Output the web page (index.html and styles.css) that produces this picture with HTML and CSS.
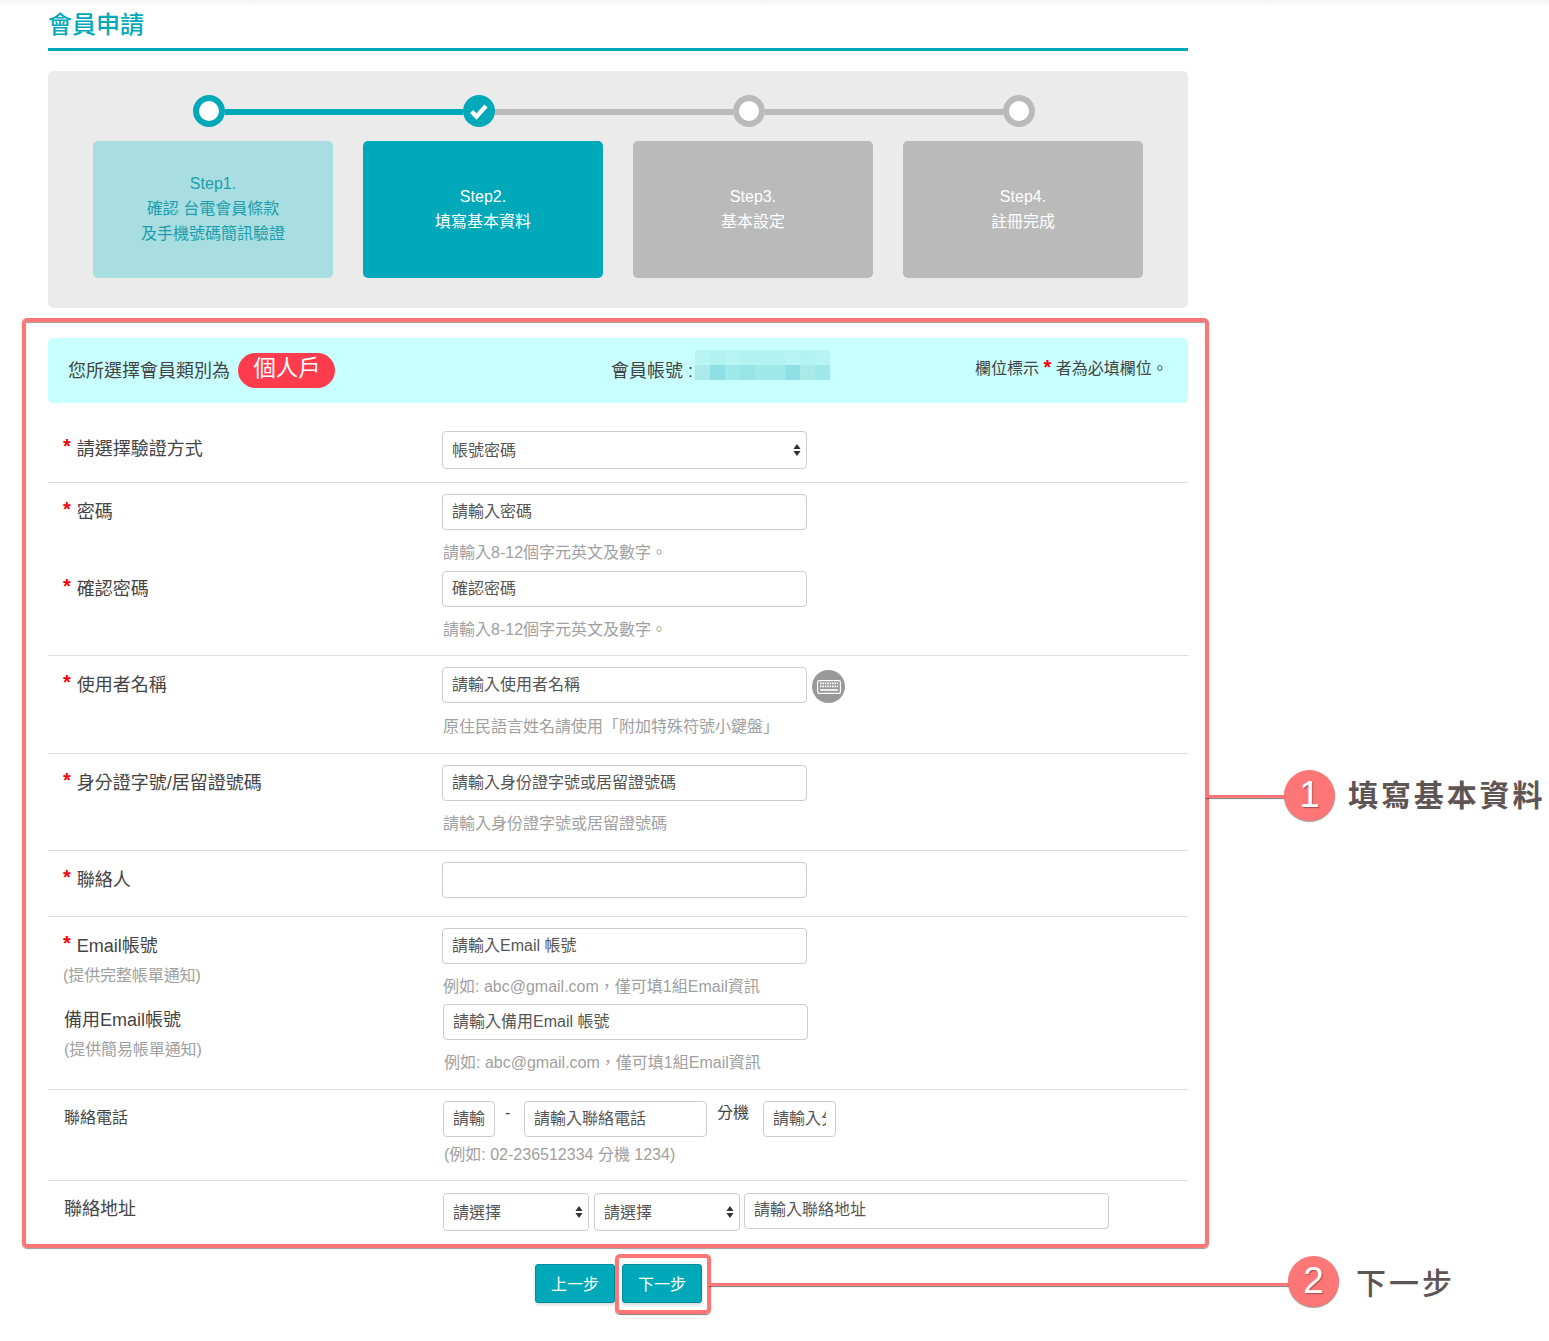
FILE: index.html
```html
<!DOCTYPE html>
<html lang="zh-Hant">
<head>
<meta charset="utf-8">
<title>會員申請</title>
<link rel="stylesheet" href="styles.css">
</head>
<body>
<main class="page">
  <h1 class="title">會員申請</h1>

  <section class="steps">
    <div class="track">
      <span class="dot dot-on"></span>
      <span class="seg seg-on"></span>
      <span class="dot dot-done">
        <svg viewBox="0 0 32 32" width="32" height="32"><path d="M8.5 16.5l5 5 9.5-10.5" fill="none" stroke="#fff" stroke-width="4.4"/></svg>
      </span>
      <span class="seg"></span>
      <span class="dot"></span>
      <span class="seg"></span>
      <span class="dot"></span>
    </div>
    <div class="cards">
      <div class="card card-past">Step1.<br>確認 台電會員條款<br>及手機號碼簡訊驗證</div>
      <div class="card card-now">Step2.<br>填寫基本資料</div>
      <div class="card">Step3.<br>基本設定</div>
      <div class="card">Step4.<br>註冊完成</div>
    </div>
  </section>

  <section class="banner">
    <div class="type">您所選擇會員類別為<span class="badge">個人戶</span></div>
    <div class="account">會員帳號 :
      <span class="mosaic">
        <i class="m1"></i><i class="m2"></i><i class="m1"></i><i class="m2"></i><i class="m2"></i><i class="m2"></i><i class="m1"></i><i class="m2"></i><i class="m1"></i>
        <i class="m3"></i><i class="m5"></i><i class="m4"></i><i class="m5b"></i><i class="m4"></i><i class="m4"></i><i class="m5"></i><i class="m3"></i><i class="m4"></i>
      </span>
    </div>
    <div class="note">欄位標示 <b class="star star-note">*</b> 者為必填欄位。</div>
  </section>

  <form class="form">
    <div class="row row-first">
      <label class="label"><b class="star">*</b> 請選擇驗證方式</label>
      <div class="sel sel-wide">
        <select><option>帳號密碼</option></select>
        <svg class="arrows" viewBox="0 0 8 12" width="8" height="12"><path d="M4 0l3.6 5H.4zM4 12L.4 7h7.2z" fill="#333"/></svg>
      </div>
    </div>

    <div class="row row-b7">
      <label class="label"><b class="star">*</b> 密碼</label>
      <div>
        <input class="in" type="text" placeholder="請輸入密碼">
        <p class="help">請輸入8-12個字元英文及數字。</p>
      </div>
      <label class="label"><b class="star">*</b> 確認密碼</label>
      <div>
        <input class="in" type="text" placeholder="確認密碼">
        <p class="help">請輸入8-12個字元英文及數字。</p>
      </div>
    </div>

    <div class="row row-b9">
      <label class="label"><b class="star">*</b> 使用者名稱</label>
      <div>
        <div class="with-key">
          <input class="in" type="text" placeholder="請輸入使用者名稱">
          <span class="key">
            <svg viewBox="0 0 24 14" width="24" height="14"><rect x=".6" y=".6" width="22.8" height="12.8" rx="1.6" fill="none" stroke="#fff" stroke-width="1.2"/><path d="M3 3.4h18M3 6.4h18" stroke="#fff" stroke-width="1.6" stroke-dasharray="1.6 .8"/><path d="M3 10h18" stroke="#fff" stroke-width="1.6"/></svg>
          </span>
        </div>
        <p class="help help-low">原住民語言姓名請使用「附加特殊符號小鍵盤」</p>
      </div>
    </div>

    <div class="row row-b8">
      <label class="label"><b class="star">*</b> 身分證字號/居留證號碼</label>
      <div>
        <input class="in" type="text" placeholder="請輸入身份證字號或居留證號碼">
        <p class="help">請輸入身份證字號或居留證號碼</p>
      </div>
    </div>

    <div class="row row-b18">
      <label class="label"><b class="star">*</b> 聯絡人</label>
      <div><input class="in" type="text"></div>
    </div>

    <div class="row row-b8">
      <div>
        <label class="label"><b class="star">*</b> Email帳號</label>
        <p class="sub">(提供完整帳單通知)</p>
      </div>
      <div>
        <input class="in" type="text" placeholder="請輸入Email 帳號">
        <p class="help help-short">例如: abc@gmail.com，僅可填1組Email資訊</p>
      </div>
      <div class="shift">
        <label class="label label-tight">備用Email帳號</label>
        <p class="sub sub-tall">(提供簡易帳單通知)</p>
      </div>
      <div class="shift-field">
        <input class="in" type="text" placeholder="請輸入備用Email 帳號">
        <p class="help">例如: abc@gmail.com，僅可填1組Email資訊</p>
      </div>
    </div>

    <div class="row row-b2">
      <label class="label label-plain label-small">聯絡電話</label>
      <div class="shift-field">
        <div class="phone">
          <input class="in in-area" type="text" placeholder="請輸入">
          <span class="dash">-</span>
          <input class="in in-tel" type="text" placeholder="請輸入聯絡電話">
          <span class="ext">分機</span>
          <input class="in in-ext" type="text" placeholder="請輸入分機">
        </div>
        <p class="help help-near">(例如: 02-236512334 分機 1234)</p>
      </div>
    </div>

    <div class="row row-last">
      <label class="label label-plain label-tight">聯絡地址</label>
      <div class="shift-field addr">
        <div class="sel sel-city">
          <select><option>請選擇</option></select>
          <svg class="arrows" viewBox="0 0 8 12" width="8" height="12"><path d="M4 0l3.6 5H.4zM4 12L.4 7h7.2z" fill="#333"/></svg>
        </div>
        <div class="sel sel-city">
          <select><option>請選擇</option></select>
          <svg class="arrows" viewBox="0 0 8 12" width="8" height="12"><path d="M4 0l3.6 5H.4zM4 12L.4 7h7.2z" fill="#333"/></svg>
        </div>
        <input class="in" type="text" placeholder="請輸入聯絡地址">
      </div>
    </div>
  </form>

  <div class="actions">
    <button class="btn" type="button">上一步</button>
    <button class="btn" type="button">下一步</button>
  </div>
</main>

<div class="mark mark-form"></div>
<div class="mark mark-next"></div>
<div class="wire wire-1"></div>
<div class="wire wire-2"></div>
<div class="num num-1">1</div>
<div class="num num-2">2</div>
<div class="call call-1">填寫基本資料</div>
<div class="call call-2">下一步</div>
</body>
</html>
```

FILE: styles.css
```css
* { box-sizing: border-box; }

html, body { margin: 0; padding: 0; }

body {
  position: relative;
  height: 1341px;
  overflow: hidden;
  font-family: "Liberation Sans", "Noto Sans CJK TC", sans-serif;
  font-size: 16px;
  color: #444;
  background: #fff linear-gradient(#f4f4f4, #fff 7px) no-repeat;
}

.page { width: 1140px; margin-left: 48px; }

.title {
  height: 51px;
  margin: 0 0 20px;
  border-bottom: 3px solid #00a9b9;
  font-size: 24px;
  font-weight: 500;
  line-height: 50px;
  color: #00a9b9;
}

/* steps */
.steps {
  height: 237px;
  margin-bottom: 30px;
  padding: 24px 45px 0;
  background: #ebebeb;
  border-radius: 5px;
}

.track { display: flex; align-items: center; height: 32px; margin: 0 0 14px 100px; }

.dot {
  flex: none;
  width: 32px;
  height: 32px;
  background: #fff;
  border: 6px solid #bababa;
  border-radius: 50%;
}

.dot-on { border-color: #00a9b9; }

.dot-done { border: 0; background: #00a9b9; }
.dot-done svg { display: block; }

.seg { flex: none; width: 238px; height: 6px; margin-top: 2px; background: #bababa; }
.seg-on { background: #00a9b9; }

.cards { display: flex; gap: 30px; }

.card {
  width: 240px;
  height: 137px;
  padding-top: 43px;
  background: #bababa;
  border-radius: 5px;
  color: #fff;
  line-height: 25px;
  text-align: center;
}

.card-past { padding-top: 30px; background: #a8dde1; color: #1d9dab; }
.card-now { background: #00a9b9; }

/* banner */
.banner {
  display: grid;
  grid-template-columns: 543px 364px 1fr;
  align-items: center;
  height: 65px;
  padding-left: 20px;
  background: #c8ffff;
  border-radius: 5px;
}

.type, .account { padding-top: 1px; font-size: 18px; line-height: 35px; }
.type { display: flex; align-items: center; }

.badge {
  width: 97px;
  height: 35px;
  margin: -2px 0 0 8px;
  padding-left: 1px;
  background: #ff3b4e;
  border-radius: 18px;
  color: #fff;
  font-size: 22.4px;
  line-height: 32px;
  text-align: center;
}

.account { position: relative; }

.mosaic {
  position: absolute;
  left: 84px;
  top: -3px;
  display: grid;
  grid-template-columns: repeat(9, 15px);
  grid-template-rows: 15px 15px;
}

.m1 { background: #b8f4f5; }
.m2 { background: #b2f2f3; }
.m3 { background: #ace9ea; }
.m4 { background: #9fe9ea; }
.m5 { background: #8fe0e5; }
.m5b { background: #98e5e8; }

.note { font-size: 16px; line-height: 20px; margin-top: -3px; }

.star { margin-right: 1px; color: #f00; font-size: 20px; font-weight: 700; line-height: 1; vertical-align: 2px; }
.star-note { margin-right: 0; vertical-align: 0; line-height: 16px; }

/* form */
.row {
  display: grid;
  grid-template-columns: 394px 1fr;
  padding-top: 11px;
  border-bottom: 1px solid #ddd;
}

.row-first { padding: 28px 0 13px; }
.row-b2 { padding-bottom: 2px; }
.row-b7 { padding-bottom: 7px; }
.row-b8 { padding-bottom: 8px; }
.row-b9 { padding-bottom: 9px; }
.row-b18 { padding-bottom: 18px; }
.row-last { padding: 12px 0 13px; border-bottom: 0; }

.label {
  display: block;
  padding: 1px 0 0 15px;
  font-size: 18px;
  line-height: 34px;
}

.label-plain { padding-left: 16px; }
.label-small { font-size: 16px; line-height: 32px; }
.label-tight { line-height: 30px; }

.sub {
  margin: 0;
  padding-left: 15px;
  color: #a0a0a0;
  line-height: 26px;
  letter-spacing: -.1px;
}

.shift .label { padding-left: 16px; }
.shift .sub { padding-left: 16px; }
.sub-tall { line-height: 30px; }
.shift-field { margin-left: 1px; }

.in {
  display: block;
  width: 365px;
  height: 36px;
  padding: 0 9px;
  background: #fff;
  border: 1px solid #ccc;
  border-radius: 4px;
  font: inherit;
  color: #555;
}

.in::placeholder { color: #555; opacity: 1; }

.help {
  height: 41px;
  margin: 0;
  padding-left: 1px;
  color: #a0a0a0;
  line-height: 46px;
}

.help-low { line-height: 48px; }
.help-short { height: 40px; }
.help-near { height: 41px; line-height: 36px; }

.sel { position: relative; }
.sel-wide { width: 365px; }
.sel-city { flex: none; width: 146px; }

.sel select {
  display: block;
  width: 100%;
  height: 38px;
  padding: 0 9px;
  appearance: none;
  background: #fff;
  border: 1px solid #ccc;
  border-radius: 4px;
  font: inherit;
  color: #555;
}

.arrows { position: absolute; right: 6px; top: 13px; }

.with-key { display: flex; align-items: flex-start; }

.key {
  display: flex;
  flex: none;
  align-items: center;
  justify-content: center;
  width: 33px;
  height: 33px;
  margin: 3px 0 0 5px;
  background: #999;
  border-radius: 50%;
}

.phone { display: flex; align-items: flex-start; }

.in-area { width: 52px; }
.in-tel { width: 183px; }
.in-ext { width: 73px; }

.dash { width: 29px; padding-left: 10px; line-height: 24px; }
.ext { width: 56px; padding-left: 10px; line-height: 24px; }

.addr { display: flex; align-items: flex-start; gap: 5px; }
.addr .in { margin-left: -1px; padding-bottom: 2px; }

/* buttons */
.actions {
  display: flex;
  justify-content: center;
  gap: 7px;
  margin-top: 20px;
}

.btn {
  width: 80px;
  height: 39px;
  padding: 0 0 1px 1px;
  background: #00a9b9;
  border: 1px solid #008c9a;
  border-radius: 3px;
  box-shadow: 0 2px 3px rgba(0, 0, 0, .15);
  font: inherit;
  color: #fff;
}

/* annotations over the page */
.mark {
  position: absolute;
  border: 4px solid #ff7676;
  box-shadow: 0 1px 1px rgba(0, 0, 0, .4), inset 0 1px 1px rgba(0, 0, 0, .4);
}

.mark-form { left: 22px; top: 318px; width: 1187px; height: 930px; border-radius: 5px; }
.mark-next { left: 615px; top: 1254px; width: 96px; height: 60px; border-radius: 5px; box-shadow: 0 1px 1px rgba(0, 0, 0, .5); }

.wire {
  position: absolute;
  height: 3px;
  background: #ff7676;
  box-shadow: 0 1px 1px rgba(0, 0, 0, .5);
}

.wire-1 { left: 1206px; top: 795px; width: 80px; }
.wire-2 { left: 709px; top: 1283px; width: 582px; }

.num {
  position: absolute;
  width: 51px;
  height: 51px;
  background: #ff7676;
  border-radius: 50%;
  box-shadow: 0 1px 1px rgba(0, 0, 0, .4);
  color: #fff;
  font-size: 37px;
  line-height: 50px;
  text-align: center;
  text-shadow: 1px 1px 1px rgba(0, 0, 0, .35);
}

.num-1 { left: 1284px; top: 770px; }
.num-2 { left: 1288px; top: 1256px; }

.call {
  position: absolute;
  color: #5f5555;
  font-size: 30px;
  white-space: nowrap;
}

.call-1 { left: 1348px; top: 774px; font-weight: 700; letter-spacing: 2.9px; line-height: 44px; }
.call-2 { left: 1356px; top: 1262px; font-weight: 500; letter-spacing: 3px; line-height: 44px; }
```
